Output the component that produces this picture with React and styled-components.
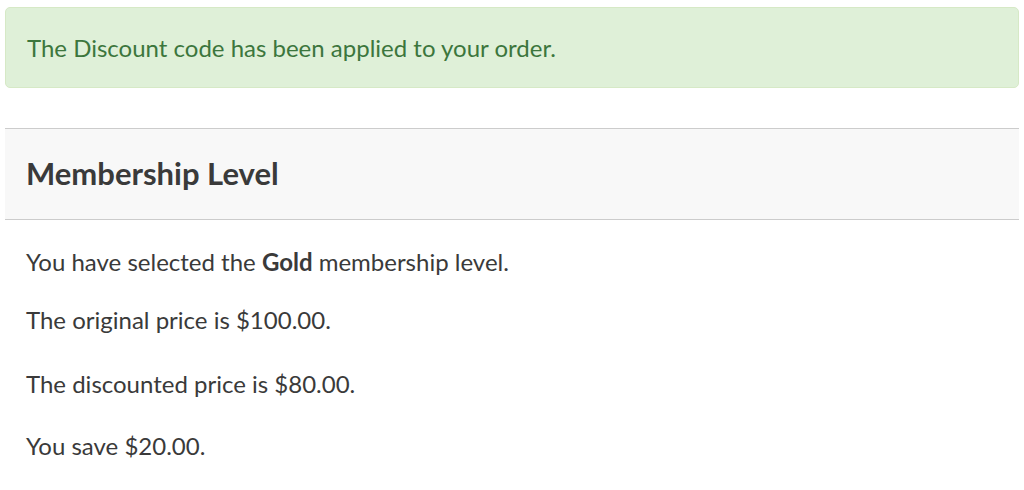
import React from "react";
import styled, { createGlobalStyle } from "styled-components";

const GlobalStyle = createGlobalStyle`
  html, body {
    margin: 0;
    padding: 0;
    background: #ffffff;
  }
  body {
    font-family: Lato, "Open Sans", "Liberation Sans", sans-serif;
    color: #3a3a3a;
  }
`;

const Page = styled.div`
  padding: 7px 5px 0 5px;
  display: flex;
  flex-direction: column;
`;

const Alert = styled.div`
  background: #dff0d8;
  border: 1px solid #d6e9c6;
  border-radius: 5px;
  color: #3c763d;
  font-size: 24px;
  line-height: 29px;
  padding: 25px 21px 25px 21px;
`;

const Section = styled.section`
  margin-top: 40px;
`;

const SectionHeader = styled.div`
  background: #f8f8f8;
  border-top: 1px solid #cccccc;
  border-bottom: 1px solid #cccccc;
  padding: 26px 21px 27px 21px;
`;

const Title = styled.h2`
  margin: 0;
  font-size: 31px;
  font-weight: 700;
  color: #3a3a3a;
  line-height: 37px;
`;

const SectionBody = styled.div`
  padding: 0 21px;
  display: flex;
  flex-direction: column;
`;

const Para = styled.p`
  margin: ${(p) => p.$top}px 0 0 0;
  font-size: 24px;
  line-height: 29px;
`;

export default function App() {
  return (
    <>
      <GlobalStyle />
      <Page>
        <Alert>The Discount code has been applied to your order.</Alert>
        <Section>
          <SectionHeader>
            <Title>Membership Level</Title>
          </SectionHeader>
          <SectionBody>
            <Para $top={27}>
              You have selected the <strong>Gold</strong> membership level.
            </Para>
            <Para $top={29}>The original price is $100.00.</Para>
            <Para $top={35}>The discounted price is $80.00.</Para>
            <Para $top={33}>You save $20.00.</Para>
          </SectionBody>
        </Section>
      </Page>
    </>
  );
}
